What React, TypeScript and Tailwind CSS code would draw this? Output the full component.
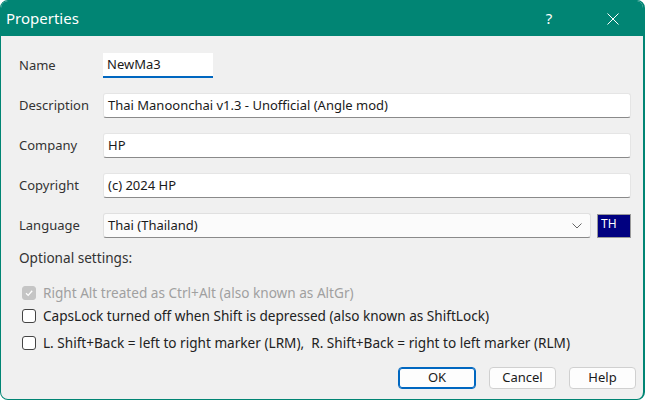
import React from "react";

const font = { fontFamily: '"Noto Sans", "Open Sans", sans-serif' };

function Field({ value, className = "" }: { value: string; className?: string }) {
  return (
    <div
      className={
        "h-[25px] bg-white border border-[#e5e5e5] border-b-[#8a8a8a] rounded-[3px] flex items-center pl-[4px] text-[13px] text-[#1a1a1a] " +
        className
      }
    >
      {value}
    </div>
  );
}

function Row({ label, children }: { label: string; children: React.ReactNode }) {
  return (
    <div className="flex items-center h-[25px]">
      <div className="w-[84px] text-[13px] text-[#333]">{label}</div>
      {children}
    </div>
  );
}

function Check({ checked, disabled, label }: { checked?: boolean; disabled?: boolean; label: string }) {
  return (
    <div className="flex items-center h-[17px]">
      <div
        className={
          "w-[14px] h-[14px] rounded-[3px] ml-[3px] mr-[7px] flex items-center justify-center " +
          (disabled ? "bg-[#c5c5c5] border border-[#c5c5c5]" : "bg-white border border-[#444]")
        }
      >
        {checked && (
          <svg width="10" height="10" viewBox="0 0 10 10">
            <path d="M2 5.2 L4.2 7.4 L8.2 2.8" fill="none" stroke="white" strokeWidth="1.3" />
          </svg>
        )}
      </div>
      <span className={"text-[13.6px] whitespace-pre " + (disabled ? "text-[#a0a0a0]" : "text-[#222]")}>{label}</span>
    </div>
  );
}

export default function App() {
  return (
    <div className="w-[645px] h-[400px] bg-white" style={font}>
      <div className="w-full h-full rounded-[8px] border border-[#018574] border-r-2 bg-[#f0f0f0] overflow-hidden flex flex-col">
        <div className="h-[35px] bg-[#018574] flex items-center text-white shrink-0">
          <div className="pl-[5px] text-[15px] flex-1">Properties</div>
          <div className="w-[20px] text-[15px] mr-[44px] text-center">?</div>
          <div className="w-[20px] mr-[20px] flex items-center justify-center">
            <svg width="12" height="12" viewBox="0 0 12 12">
              <path d="M0.5 0.5 L11.5 11.5 M11.5 0.5 L0.5 11.5" stroke="white" strokeWidth="1" />
            </svg>
          </div>
        </div>
        <div className="flex-1 flex flex-col pl-[18px] pr-[12px]">
          <div className="flex flex-col gap-[15px] pt-[17px]">
            <Row label="Name">
              <div className="w-[110px] h-[25px] bg-white border-b-2 border-[#0067c0] flex items-center pl-[4px] text-[13px] text-[#1a1a1a]">
                NewMa3
              </div>
            </Row>
            <Row label="Description">
              <Field value="Thai Manoonchai v1.3 - Unofficial (Angle mod)" className="flex-1" />
            </Row>
            <Row label="Company">
              <Field value="HP" className="flex-1" />
            </Row>
            <Row label="Copyright">
              <Field value="(c) 2024 HP" className="flex-1" />
            </Row>
            <Row label="Language">
              <div className="flex-1 h-[25px] bg-[#fbfbfb] border border-[#e0e0e0] border-b-[#8a8a8a] rounded-[3px] flex items-center pl-[4px] pr-[8px] text-[13px] text-[#1a1a1a]">
                <span className="flex-1">Thai (Thailand)</span>
                <svg width="10" height="6" viewBox="0 0 10 6">
                  <path d="M0.5 0.5 L5 5 L9.5 0.5" fill="none" stroke="#666" strokeWidth="1" />
                </svg>
              </div>
              <div className="w-[34px] h-[24px] ml-[6px] bg-[#000080] border border-[#9a9a9a] text-white text-[12px] leading-none pl-[3px] pt-[3px]">
                TH
              </div>
            </Row>
          </div>
          <div className="mt-[10px] text-[13.6px] text-[#333]">Optional settings:</div>
          <div className="mt-[16px] flex flex-col">
            <Check checked disabled label="Right Alt treated as Ctrl+Alt (also known as AltGr)" />
            <div className="h-[6px]" />
            <Check label="CapsLock turned off when Shift is depressed (also known as ShiftLock)" />
            <div className="h-[10px]" />
            <Check label="L. Shift+Back = left to right marker (LRM),  R. Shift+Back = right to left marker (RLM)" />
          </div>
          <div className="mt-auto mb-[10px] mr-[-5px] flex justify-end gap-[13px] text-[13px] text-[#1a1a1a]">
            <button className="w-[78px] h-[22px] bg-[#fdfdfd] border border-[#0067c0] rounded-[4px] shadow-[0_0_0_1px_#0067c0_inset]">OK</button>
            <button className="w-[67px] h-[22px] bg-[#fdfdfd] border border-[#d0d0d0] rounded-[4px]">Cancel</button>
            <button className="w-[67px] h-[22px] bg-[#fdfdfd] border border-[#d0d0d0] rounded-[4px]">Help</button>
          </div>
        </div>
      </div>
    </div>
  );
}
